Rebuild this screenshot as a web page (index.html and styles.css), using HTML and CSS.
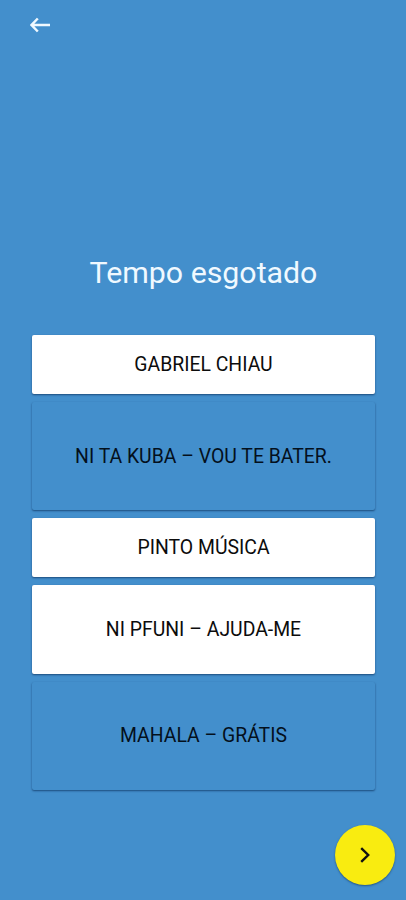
FILE: index.html
```
<!DOCTYPE html>
<html lang="pt">
<head>
    <meta charset="UTF-8">
    <meta name="viewport" content="width=device-width, initial-scale=1.0">
    <title>Tempo esgotado</title>
    <link rel="stylesheet" href="styles.css">
</head>
<body>
    <header class="topbar">
        <button class="back" aria-label="Voltar">
            <svg width="20" height="16" viewBox="0 0 20 16">
                <path d="M7.8 1.5L1.5 8l6.3 6.5M1.8 8H20"/>
            </svg>
        </button>
    </header>

    <main class="quiz">
        <h1>Tempo esgotado</h1>
        <div class="answers">
            <button class="answer small">GABRIEL CHIAU</button>
            <button class="answer selected">NI TA KUBA – VOU TE BATER.</button>
            <button class="answer small">PINTO MÚSICA</button>
            <button class="answer medium">NI PFUNI – AJUDA-ME</button>
            <button class="answer selected">MAHALA – GRÁTIS</button>
        </div>
    </main>

    <button class="next" aria-label="Seguinte">
        <svg width="10" height="16" viewBox="0 0 10 16">
            <path d="M1.2 1.2L8.2 8l-7 6.8"/>
        </svg>
    </button>
</body>
</html>
```
FILE: styles.css
```
body {
    margin: 0;
    height: 900px;
    overflow: hidden;
    background-color: #438fcc;
    font-family: Roboto, sans-serif;
}
button {
    border: none;
    padding: 0;
    font-family: inherit;
    cursor: pointer;
}
svg {
    display: block;
    fill: none;
}
.topbar {
    height: 50px;
    padding-left: 30px;
    display: flex;
    align-items: center;
}
.back {
    background: none;
}
.back svg {
    stroke: #f0f9ff;
    stroke-width: 2.5;
}
.quiz {
    padding: 203px 31px 0 32px;
}
h1 {
    margin: 0 0 42px;
    height: 40px;
    line-height: 39px;
    font-size: 30.3px;
    font-weight: 400;
    text-align: center;
    color: #f0f9ff;
}
.answers {
    display: flex;
    flex-direction: column;
    gap: 8px;
}
.answer {
    height: 108px;
    border-radius: 2px;
    background-color: #fff;
    box-shadow: 0 1px 2px rgba(0, 30, 70, 0.6);
    font-size: 19.4px;
    color: #0c0c0c;
}
.small {
    height: 59px;
}
.medium {
    height: 88.5px;
}
.selected {
    background-color: #438fcc;
    color: #04101c;
}
.next {
    position: absolute;
    left: 335px;
    top: 825px;
    width: 60px;
    height: 60px;
    border-radius: 50%;
    background-color: #f9ec10;
    box-shadow: 0 1px 2px rgba(0, 30, 70, 0.5);
    display: flex;
    justify-content: center;
    align-items: center;
}
.next svg {
    stroke: #111;
    stroke-width: 2.4;
}
```
